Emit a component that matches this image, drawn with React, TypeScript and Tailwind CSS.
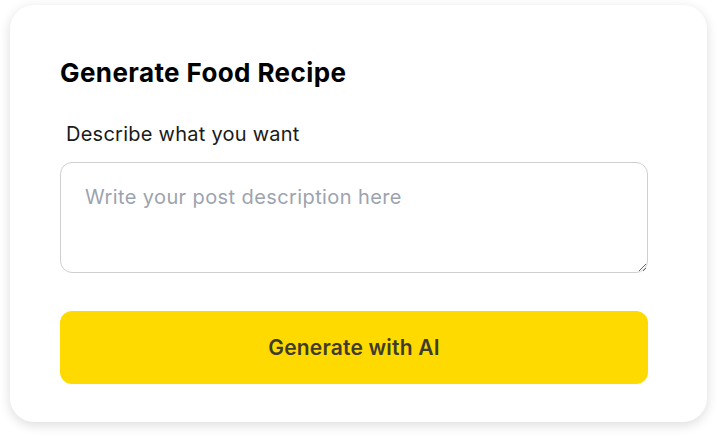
import React from 'react';

const App = () => {
  return (
    <div className="min-h-screen w-full bg-white font-['Inter',sans-serif] pt-[5px] pl-[10px]">
      <div className="w-[697px] h-[417px] rounded-[24px] bg-white shadow-[0_3px_12px_rgba(0,0,0,0.14)] pl-[50px] pt-[52px]">
        <h2 className="text-[26px] leading-8 tracking-[0.4px] font-bold text-black">Generate Food Recipe</h2>
        <label className="block mt-[31px] ml-[6px] text-xl leading-7 tracking-[0.25px] text-[#1a1a1a]">
          Describe what you want
        </label>
        <textarea
          className="block mt-[14px] w-[588px] h-[111px] rounded-xl border border-[#cfcfcf] bg-white px-6 pt-[20px] text-xl leading-7 tracking-[0.4px] text-gray-800 placeholder:text-[#9ca3af] outline-none"
          placeholder="Write your post description here"
        />
        <button className="mt-[38px] w-[588px] h-[73px] rounded-xl bg-[#ffda00] text-[21px] tracking-[0.2px] font-semibold text-[#3f3c2c]">
          Generate with AI
        </button>
      </div>
    </div>
  );
};

export default App;
